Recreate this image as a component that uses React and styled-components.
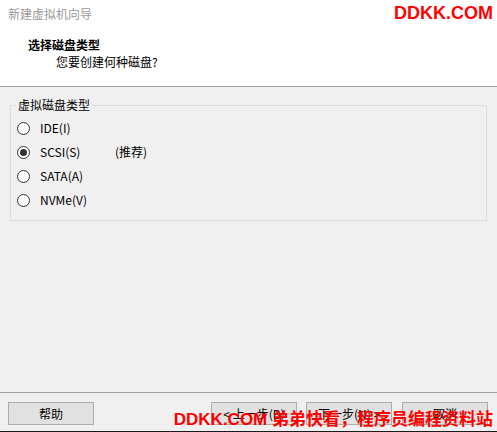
import React from "react";
import styled, { createGlobalStyle } from "styled-components";

const GlobalStyle = createGlobalStyle`
  html, body {
    margin: 0;
    padding: 0;
    background: #f0f0f0;
  }
  body {
    font-family: "Noto Sans CJK SC", "Noto Sans", sans-serif;
    font-size: 12px;
    color: #000;
  }
`;

const diskTypes = [
  { label: "IDE(I)" },
  { label: "SCSI(S)", checked: true, note: "(推荐)" },
  { label: "SATA(A)" },
  { label: "NVMe(V)" },
];

const App = () => {
  return (
    <>
      <GlobalStyle />
      <Window>
        <Header>
          <Title>新建虚拟机向导</Title>
          <Heading>选择磁盘类型</Heading>
          <SubHeading>您要创建何种磁盘?</SubHeading>
        </Header>
        <Body>
          <Group>
            <Legend>虚拟磁盘类型</Legend>
            {diskTypes.map((d) => (
              <Option key={d.label}>
                <Radio $checked={d.checked} />
                <OptionText>{d.label}</OptionText>
                {d.note && <Note>{d.note}</Note>}
              </Option>
            ))}
          </Group>
        </Body>
        <Footer>
          <Button>帮助</Button>
          <Spacer />
          <Button>&lt; 上一步(B)</Button>
          <Button $gap={9}>下一步(N) &gt;</Button>
          <Button $gap={10}>取消</Button>
        </Footer>
        <TopMark>DDKK.COM</TopMark>
        <BottomMark>DDKK.COM 弟弟快看，程序员编程资料站</BottomMark>
      </Window>
    </>
  );
};

const Window = styled.div`
  position: relative;
  width: 497px;
  height: 432px;
  display: flex;
  flex-direction: column;
  border-bottom: 1px solid #1a1a1a;
  box-sizing: border-box;
  overflow: hidden;
`;

const Header = styled.div`
  height: 86px;
  background: #fff;
  border-bottom: 1px solid #a0a0a0;
  display: flex;
  flex-direction: column;
  line-height: 16px;
  flex-shrink: 0;
`;

const Title = styled.div`
  color: #9a9a9a;
  padding: 6px 0 0 8px;
`;

const Heading = styled.div`
  font-weight: 700;
  padding: 15px 0 0 28px;
`;

const SubHeading = styled.div`
  padding: 1px 0 0 56px;
`;

const Body = styled.div`
  flex: 1;
  padding-top: 10px;
`;

const Group = styled.fieldset`
  margin: 0 10px;
  padding: 3px 5px 8px 5px;
  border: 1px solid #dcdcdc;
  line-height: 16px;
`;

const Legend = styled.legend`
  padding: 0 2px;
`;

const Option = styled.div`
  display: flex;
  align-items: center;
  height: 24px;
  padding-left: 1px;
`;

const Radio = styled.span`
  width: 13px;
  height: 13px;
  box-sizing: border-box;
  border-radius: 50%;
  border: 1px solid #333;
  background: #fff;
  display: flex;
  align-items: center;
  justify-content: center;
  margin-right: 10px;
  &::after {
    content: "";
    width: 7px;
    height: 7px;
    border-radius: 50%;
    background: ${(p) => (p.$checked ? "#333" : "transparent")};
  }
`;

const OptionText = styled.span`
  width: 75px;
`;

const Note = styled.span``;

const Footer = styled.div`
  height: 39px;
  border-top: 1px solid #a0a0a0;
  display: flex;
  align-items: flex-start;
  padding: 9px 9px 0 8px;
  box-sizing: border-box;
  flex-shrink: 0;
`;

const Spacer = styled.div`
  flex: 1;
`;

const Button = styled.div`
  width: 86px;
  height: 23px;
  box-sizing: border-box;
  border: 1px solid #adadad;
  background: #e1e1e1;
  display: flex;
  align-items: center;
  justify-content: center;
  margin-left: ${(p) => p.$gap || 0}px;
`;

const Mark = styled.div`
  position: absolute;
  color: #ff0000;
  font-family: "Liberation Sans", "Noto Sans CJK SC", sans-serif;
  font-weight: 700;
  white-space: nowrap;
  line-height: 1;
`;

const TopMark = styled(Mark)`
  top: 4px;
  right: 4px;
  font-size: 18px;
`;

const BottomMark = styled(Mark)`
  bottom: 3px;
  right: 4px;
  font-size: 17px;
`;

export default App;
